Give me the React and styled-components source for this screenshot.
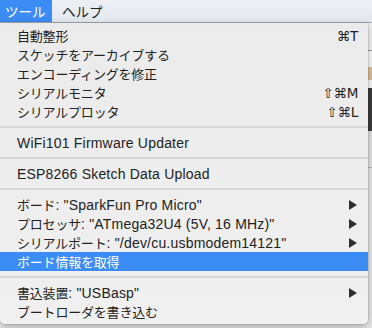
import React from "react";
import styled, { createGlobalStyle } from "styled-components";

const GlobalStyle = createGlobalStyle`
  html, body { margin: 0; padding: 0; }
  body {
    width: 372px;
    height: 328px;
    overflow: hidden;
    font-family: "Liberation Sans", "Noto Sans CJK JP", sans-serif;
  }
`;

const Screen = styled.div`
  position: relative;
  width: 372px;
  height: 328px;
  display: flex;
  flex-direction: column;
  overflow: hidden;
`;

const MenuBar = styled.div`
  display: flex;
  align-items: stretch;
  gap: 4px;
  height: 22px;
  background: linear-gradient(#edf0f5, #e4e9ef);
  border-bottom: 1px solid #a9afb6;
  flex: none;
`;

const MenuTitle = styled.div`
  display: flex;
  align-items: center;
  width: ${(p) => (p.$active ? "52px" : "auto")};
  box-sizing: border-box;
  padding: 0 0 0 ${(p) => (p.$active ? "5px" : "6px")};
  font-family: "Noto Sans CJK JP", sans-serif;
  font-size: 13.5px;
  color: ${(p) => (p.$active ? "#ffffff" : "#1e1e1e")};
  background: ${(p) => (p.$active ? "#3b8cf5" : "transparent")};
`;

const Backdrop = styled.div`
  flex: 1;
  background: linear-gradient(
    #f2f2f2 0px,
    #f2f2f2 27px,
    #9a9a9a 27px,
    #9a9a9a 28px,
    #fafafa 28px,
    #fafafa 44px,
    #d8c29a 44px,
    #d8c29a 57px,
    #fafafa 57px,
    #fafafa 65px,
    #3c3c3c 65px,
    #3c3c3c 108px,
    #e4e4e4 108px,
    #e4e4e4 144px,
    #b8b8b8 144px,
    #b8b8b8 145px,
    #e8e8e8 145px
  );
`;

const Dropdown = styled.div`
  position: absolute;
  top: 23px;
  left: 0;
  width: 368px;
  padding: 3px 0 3px;
  background: linear-gradient(#ebebeb, #eeeeee 60%, #f0f0f0);
  border-radius: 0 0 5px 5px;
  box-shadow: 0 3px 8px rgba(0, 0, 0, 0.28), 0 0 0 0.5px rgba(0, 0, 0, 0.15);
  display: flex;
  flex-direction: column;
`;

const Row = styled.div`
  height: 19px;
  display: flex;
  align-items: center;
  padding: 0 12px 0 17px;
  font-size: 14px;
  letter-spacing: 0.2px;
  color: ${(p) => (p.$selected ? "#ffffff" : "#222222")};
  background: ${(p) => (p.$selected ? "#3b8cf5" : "transparent")};
  white-space: nowrap;
`;

const Label = styled.span`
  flex: 1;
`;

const Jp = styled.span`
  font-family: "Noto Sans CJK JP", sans-serif;
  font-size: 13px;
  letter-spacing: -0.2px;
`;

const Shortcut = styled.span`
  font-family: "DejaVu Sans", sans-serif;
  font-size: 13.5px;
  letter-spacing: -0.3px;
  color: #222;
  margin-right: -2px;
`;

const Arrow = styled.span`
  width: 0;
  height: 0;
  border-top: 5px solid transparent;
  border-bottom: 5px solid transparent;
  border-left: 8px solid #2e2e2e;
  margin-right: -1px;
`;

const Separator = styled.div`
  height: 12px;
  display: flex;
  align-items: center;
  &::after {
    content: "";
    flex: 1;
    height: 2px;
    background: #d6d6d6;
  }
`;

const CJK = /([\u3000-\u30ff\u4e00-\u9fff\uff00-\uffef]+)/;

function Text({ children }) {
  const parts = children.split(CJK);
  return parts.map((p, i) =>
    i % 2 === 1 ? <Jp key={i}>{p}</Jp> : <React.Fragment key={i}>{p}</React.Fragment>
  );
}

const items = [
  { label: "自動整形", shortcut: "⌘T" },
  { label: "スケッチをアーカイブする" },
  { label: "エンコーディングを修正" },
  { label: "シリアルモニタ", shortcut: "⇧⌘M" },
  { label: "シリアルプロッタ", shortcut: "⇧⌘L" },
  { sep: true },
  { label: "WiFi101 Firmware Updater" },
  { sep: true },
  { label: "ESP8266 Sketch Data Upload" },
  { sep: true },
  { label: 'ボード: "SparkFun Pro Micro"', submenu: true },
  { label: 'プロセッサ: "ATmega32U4 (5V, 16 MHz)"', submenu: true },
  { label: 'シリアルポート: "/dev/cu.usbmodem14121"', submenu: true },
  { label: "ボード情報を取得", selected: true },
  { sep: true },
  { label: '書込装置: "USBasp"', submenu: true },
  { label: "ブートローダを書き込む" },
];

export default function App() {
  return (
    <>
      <GlobalStyle />
      <Screen>
        <MenuBar>
          <MenuTitle $active>ツール</MenuTitle>
          <MenuTitle>ヘルプ</MenuTitle>
        </MenuBar>
        <Backdrop />
        <Dropdown>
          {items.map((it, i) =>
            it.sep ? (
              <Separator key={i} />
            ) : (
              <Row key={i} $selected={it.selected}>
                <Label>
                  <Text>{it.label}</Text>
                </Label>
                {it.shortcut && <Shortcut>{it.shortcut}</Shortcut>}
                {it.submenu && <Arrow />}
              </Row>
            )
          )}
        </Dropdown>
      </Screen>
    </>
  );
}
